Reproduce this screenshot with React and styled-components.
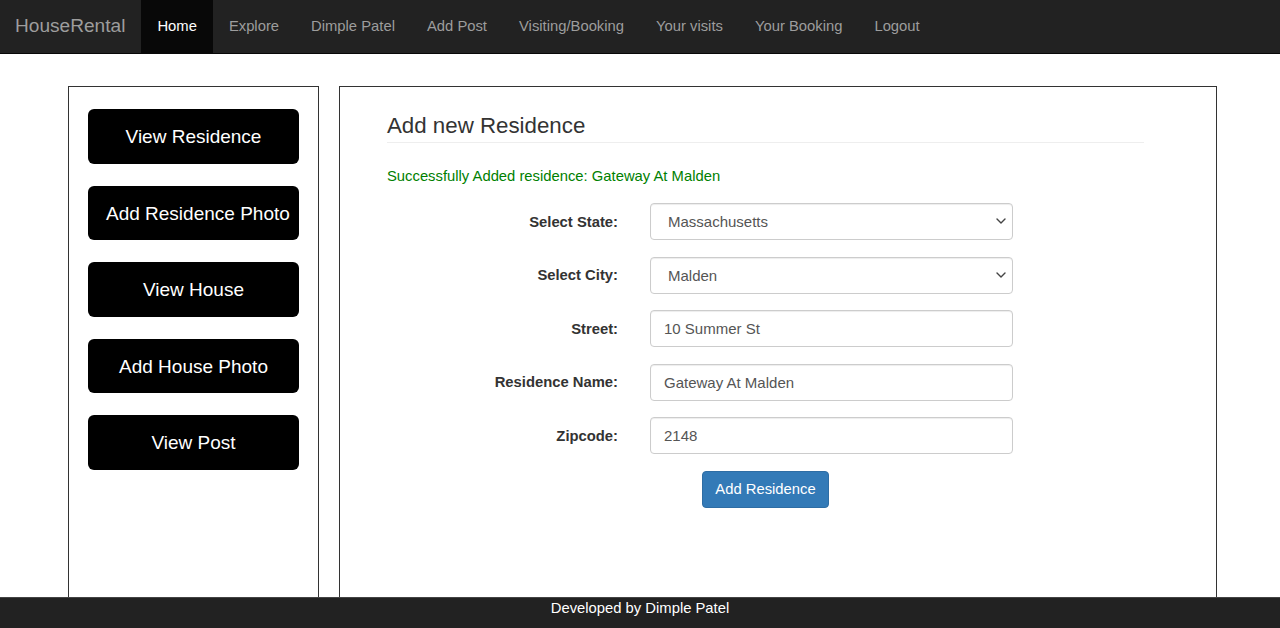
import React from 'react'
import styled, { createGlobalStyle } from 'styled-components'

const GlobalStyle = createGlobalStyle`
    body {
        margin: 0;
        font-family: "Liberation Sans", Arial, sans-serif;
        color: #333;
        background: #fff;
        overflow: hidden;
    }
    * {
        box-sizing: border-box;
    }
`;

const navLinks = ['Home', 'Explore', 'Dimple Patel', 'Add Post', 'Visiting/Booking', 'Your visits', 'Your Booking', 'Logout'];
const sideButtons = ['View Residence', 'Add Residence Photo', 'View House', 'Add House Photo', 'View Post'];

function Chevron() {
    return (
        <Arrow width="10" height="6" viewBox="0 0 10 6">
            <path d="M1 1l4 4 4-4" fill="none" stroke="#444" strokeWidth="1.4" strokeLinecap="round" strokeLinejoin="round" />
        </Arrow>
    )
}

export default function App() {
    return (
        <>
            <GlobalStyle />
            <Navbar>
                <Brand>HouseRental</Brand>
                <NavList>
                    {navLinks.map((link, index) => (
                        <NavItem key={link} active={index === 0}>{link}</NavItem>
                    ))}
                </NavList>
            </Navbar>

            <Main>
                <SidePanel>
                    {sideButtons.map((label) => (
                        <SideButton key={label}>{label}</SideButton>
                    ))}
                </SidePanel>

                <ContentPanel>
                    <Title>Add new Residence</Title>
                    <Success>Successfully Added residence: Gateway At Malden</Success>
                    <Form>
                        <Row>
                            <Label>Select State:</Label>
                            <SelectWrap>
                                <Select defaultValue="Massachusetts">
                                    <option>Massachusetts</option>
                                </Select>
                                <Chevron />
                            </SelectWrap>
                        </Row>
                        <Row>
                            <Label>Select City:</Label>
                            <SelectWrap>
                                <Select defaultValue="Malden">
                                    <option>Malden</option>
                                </Select>
                                <Chevron />
                            </SelectWrap>
                        </Row>
                        <Row>
                            <Label>Street:</Label>
                            <Input defaultValue="10 Summer St" />
                        </Row>
                        <Row>
                            <Label>Residence Name:</Label>
                            <Input defaultValue="Gateway At Malden" />
                        </Row>
                        <Row>
                            <Label>Zipcode:</Label>
                            <Input defaultValue="2148" />
                        </Row>
                        <ButtonRow>
                            <SubmitButton>Add Residence</SubmitButton>
                        </ButtonRow>
                    </Form>
                </ContentPanel>
            </Main>

            <Footer>Developed by Dimple Patel</Footer>
        </>
    )
}

const Navbar = styled.nav`
    display: flex;
    align-items: stretch;
    height: 54px;
    background-color: #222;
    border-bottom: 1px solid #080808;
`;

const Brand = styled.div`
    display: flex;
    align-items: center;
    padding: 0 16px 2px 15px;
    font-size: 19.1px;
    color: #9d9d9d;
`;

const NavList = styled.div`
    display: flex;
`;

const NavItem = styled.a`
    display: flex;
    align-items: center;
    padding: 0 16px 2px;
    font-size: 14.8px;
    color: ${(p) => (p.active ? '#fff' : '#9d9d9d')};
    background-color: ${(p) => (p.active ? '#080808' : 'transparent')};
    cursor: pointer;
`;

const Main = styled.div`
    display: flex;
    align-items: flex-start;
    gap: 20px;
    padding: 32px 0 0 68px;
`;

const SidePanel = styled.div`
    display: flex;
    flex-direction: column;
    gap: 22px;
    width: 251px;
    min-height: 560px;
    padding: 22px 19px;
    border: 1px solid #333;
`;

const SideButton = styled.button`
    width: 211px;
    height: 54.5px;
    padding: 2px 18px 0;
    border: none;
    border-radius: 6px;
    background-color: #000;
    color: #fff;
    font-family: "Liberation Sans", Arial, sans-serif;
    font-size: 19px;
    text-align: center;
    white-space: nowrap;
    cursor: pointer;
`;

const ContentPanel = styled.div`
    width: 878px;
    min-height: 560px;
    padding: 22px 72px 0 47px;
    border: 1px solid #333;
`;

const Title = styled.h3`
    margin: 0;
    padding: 5px 0 4px;
    font-size: 22.3px;
    font-weight: normal;
    line-height: 24px;
    color: #333;
    border-bottom: 1px solid #eee;
`;

const Success = styled.p`
    margin: 23px 0 0;
    font-size: 14.8px;
    line-height: 20px;
    color: #008000;
`;

const Form = styled.form`
    display: flex;
    flex-direction: column;
    gap: 16.6px;
    margin-top: 17px;
`;

const Row = styled.div`
    display: grid;
    grid-template-columns: 231px 363px;
    column-gap: 32px;
    align-items: center;
`;

const Label = styled.label`
    text-align: right;
    font-size: 14.8px;
    font-weight: bold;
    color: #333;
`;

const fieldStyles = `
    width: 363px;
    height: 37px;
    padding: 0 13px;
    border: 1px solid #ccc;
    border-radius: 4px;
    box-shadow: inset 0 1px 1px rgba(0, 0, 0, 0.075);
    background: #fff;
    font-family: "Liberation Sans", Arial, sans-serif;
    font-size: 15px;
    color: #555;
    outline: none;
`;

const Input = styled.input`
    ${fieldStyles}
`;

const SelectWrap = styled.div`
    position: relative;
    width: 363px;
`;

const Select = styled.select`
    ${fieldStyles}
    appearance: none;
    padding-left: 17px;
`;

const Arrow = styled.svg`
    position: absolute;
    right: 7px;
    top: 15px;
    pointer-events: none;
`;

const ButtonRow = styled.div`
    display: flex;
    padding-left: 315px;
`;

const SubmitButton = styled.button`
    width: 127px;
    height: 37px;
    padding: 0;
    border: 1px solid #2e6da4;
    border-radius: 4px;
    background-color: #337ab7;
    color: #fff;
    font-family: "Liberation Sans", Arial, sans-serif;
    font-size: 14.8px;
    cursor: pointer;
`;

const Footer = styled.footer`
    position: fixed;
    left: 0;
    right: 0;
    bottom: 0;
    height: 31px;
    padding-top: 0;
    background-color: #222;
    border-top: 1px solid #444;
    color: #fff;
    font-size: 14.8px;
    line-height: 20px;
    text-align: center;
`;
